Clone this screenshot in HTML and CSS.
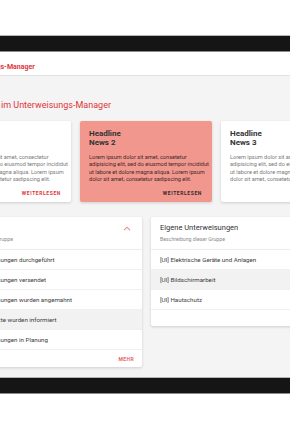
FILE: index.html
```html
<!DOCTYPE html>
<html lang="de">
<head>
<meta charset="utf-8">
<title>Unterweisungs-Manager</title>
<link rel="stylesheet" href="styles.css">
</head>
<body>
<div class="device">
  <div class="bezel"></div>
  <div class="screen">
    <header class="appbar">
      <div class="appbar-inner">
        <span class="app-title">Unterweisungs-Manager</span>
      </div>
    </header>
    <main class="content">
      <h1 class="welcome">Willkommen im Unterweisungs-Manager</h1>
      <section class="news">
        <article class="card">
          <h2 class="card-title">Headline<br>News 1</h2>
          <p class="card-text">Lorem ipsum dolor sit amet, consectetur adipisicing elit, sed do eiusmod tempor incididut ut labore et dolore magna aliqua. Lorem ipsum dolor sit amet, consetetur sadipscing elit.</p>
          <a class="card-link">WEITERLESEN</a>
        </article>
        <article class="card card-accent">
          <h2 class="card-title">Headline<br>News 2</h2>
          <p class="card-text">Lorem ipsum dolor sit amet, consetetur adipisicing elit, sed do eiusmod tempor incididut ut labore et dolore magna aliqua. Lorem ipsum dolor sit amet, consetetur sadipscing elit.</p>
          <a class="card-link">WEITERLESEN</a>
        </article>
        <article class="card">
          <h2 class="card-title">Headline<br>News 3</h2>
          <p class="card-text">Lorem ipsum dolor sit amet, consetetur adipisicing elit, sed do eiusmod tempor incididut ut labore et dolore magna aliqua. Lorem ipsum dolor sit amet, consetetur sadipscing elit.</p>
          <a class="card-link">WEITERLESEN</a>
        </article>
      </section>
      <section class="lists">
        <div class="panel">
          <div class="panel-head">
            <div class="panel-head-text">
              <div class="panel-title">Übersicht</div>
              <div class="panel-sub">Beschreibung dieser Gruppe</div>
            </div>
            <svg class="chevron" width="8" height="5" viewBox="0 0 8 5"><path d="M1 4.2 L4 1.2 L7 4.2" fill="none" stroke="#ec8a86" stroke-width="1.1"/></svg>
          </div>
          <ul class="rows rows-status">
            <li class="row">Unterweisungen durchgeführt</li>
            <li class="row">Unterweisungen versendet</li>
            <li class="row">Unterweisungen wurden angemahnt</li>
            <li class="row row-active">Vorgesetzte wurden informiert</li>
            <li class="row">Unterweisungen in Planung</li>
          </ul>
          <div class="panel-foot"><a class="more">MEHR</a></div>
        </div>
        <div class="panel">
          <div class="panel-head">
            <div class="panel-head-text">
              <div class="panel-title">Eigene Unterweisungen</div>
              <div class="panel-sub">Beschreibung dieser Gruppe</div>
            </div>
          </div>
          <ul class="rows">
            <li class="row">[UI] Elektrische Geräte und Anlagen</li>
            <li class="row row-active">[UI] Bildschirmarbeit</li>
            <li class="row">[UI] Hautschutz</li>
          </ul>
          <div class="panel-foot panel-foot-empty"></div>
        </div>
      </section>
    </main>
  </div>
  <div class="bezel"></div>
</div>
</body>
</html>
```
FILE: styles.css
```css
* { box-sizing: border-box; }
html, body {
  margin: 0;
  padding: 0;
  background: #ffffff;
  overflow: hidden;
  font-family: Roboto, "Liberation Sans", sans-serif;
}
.device {
  margin-top: 35px;
  width: 290px;
  overflow: hidden;
}
.bezel {
  height: 17px;
  background: #151515;
  border-top: 1px solid #b5b5b5;
  border-bottom: 1px solid #8a8a8a;
}
.screen {
  background: #f4f4f4;
  height: 325px;
  overflow: hidden;
}
.appbar {
  height: 24px;
  background: #ffffff;
  border-bottom: 1px solid #e2e2e2;
  display: flex;
  align-items: center;
}
.appbar-inner {
  margin-left: -61px;
  padding-left: 18px;
  white-space: nowrap;
}
.app-title {
  color: #e0353a;
  font-weight: 700;
  font-size: 7px;
  line-height: 9px;
}
.content {
  margin-left: -61px;
  width: 415px;
  padding-top: 23px;
}
.welcome {
  margin: 0 0 10px 10px;
  font-weight: 400;
  font-size: 9px;
  line-height: 12px;
  color: #e0353a;
  white-space: nowrap;
}
.news {
  display: flex;
  gap: 9px;
}
.card {
  width: 132px;
  height: 81px;
  flex: none;
  background: #ffffff;
  border-radius: 2px;
  box-shadow: 0 1px 3px rgba(0,0,0,0.16);
  padding: 8px 0 5px 9px;
  display: flex;
  flex-direction: column;
}
.card-accent { background: #f2978e; }
.card-title {
  margin: 0;
  font-size: 8px;
  line-height: 9px;
  font-weight: 700;
  color: #333333;
}
.card-text {
  margin: 7px 0 0 0;
  font-size: 5.6px;
  line-height: 7.4px;
  color: #7a7a7a;
}
.card-accent .card-text { color: #3a2a28; }
.card-link {
  margin-top: auto;
  margin-right: 10px;
  align-self: flex-end;
  font-size: 5px;
  line-height: 7px;
  font-weight: 700;
  letter-spacing: 0.6px;
  color: #e0353a;
}
.card-accent .card-link { color: #3a2a28; }
.lists {
  display: flex;
  gap: 9px;
  margin-top: 15px;
  align-items: flex-start;
}
.panel {
  width: 203px;
  flex: none;
  background: #ffffff;
  border-radius: 2px;
  box-shadow: 0 1px 3px rgba(0,0,0,0.16);
}
.panel-head {
  height: 33px;
  padding: 6px 11px 0 9px;
  border-bottom: 1px solid #ececec;
  display: flex;
  justify-content: space-between;
  align-items: flex-start;
}
.panel-title {
  font-size: 7.5px;
  line-height: 10px;
  color: #333333;
}
.panel-sub {
  margin-top: 3px;
  font-size: 5.2px;
  line-height: 7px;
  color: #8a8a8a;
}
.chevron { margin-top: 3px; }
.rows {
  list-style: none;
  margin: 0;
  padding: 0;
}
.row {
  height: 20px;
  display: flex;
  align-items: center;
  padding-left: 9px;
  font-size: 6.2px;
  color: #3c3c3c;
  border-bottom: 1px solid #f0f0f0;
  white-space: nowrap;
}
.rows-status .row { padding-left: 34px; }
.row-active { background: #f2f2f2; }
.panel-foot {
  height: 17px;
  display: flex;
  justify-content: flex-end;
  align-items: center;
  padding-right: 8px;
}
.panel-foot-empty { height: 16px; }
.more {
  font-size: 5px;
  font-weight: 700;
  letter-spacing: 0.4px;
  color: #e8636a;
}
```
